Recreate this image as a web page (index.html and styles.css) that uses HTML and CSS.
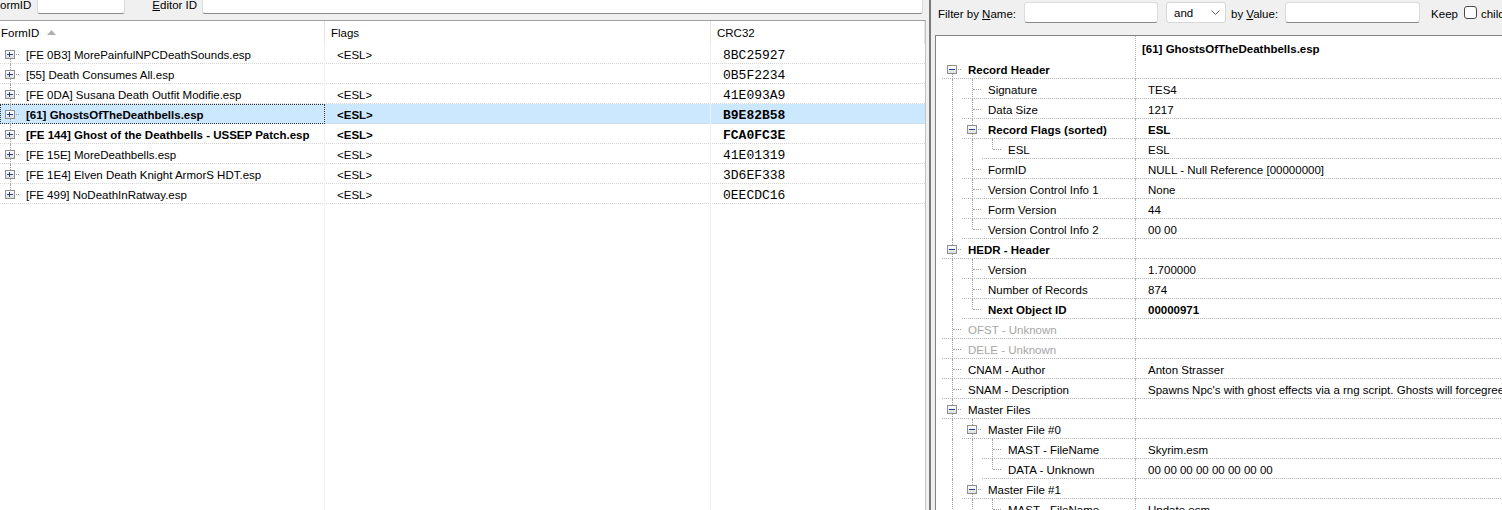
FILE: index.html
```html
<!DOCTYPE html>
<html lang="en">
  <head>
    <meta charset="UTF-8" />
    <title>xEdit - GhostsOfTheDeathbells.esp</title>
    <link rel="stylesheet" href="styles.css">
  </head>
  <body>
    <div class="window">
      <!-- plugin list -->
      <div class="left-pane">
        <div class="search-bar">
          <label class="search-label form-label"><u>F</u>ormID</label>
          <input class="search-input form-input" type="text" />
          <label class="search-label editor-label"><u>E</u>ditor ID</label>
          <input class="search-input editor-input" type="text" />
        </div>

        <div class="plugin-list">
          <div class="list-header">
            <div class="col col-name">
              FormID
              <svg class="sort-arrow" width="9" height="5" viewBox="0 0 9 5"><polygon points="0,5 4.5,0 9,5" /></svg>
            </div>
            <div class="col col-flags">Flags</div>
            <div class="col col-crc">CRC32</div>
          </div>

          <div class="list-row">
            <div class="cell c-name"><span class="node first"><i class="box plus"></i></span>[FE 0B3] MorePainfulNPCDeathSounds.esp</div>
            <div class="cell c-flags">&lt;ESL&gt;</div>
            <div class="cell c-crc">8BC25927</div>
          </div>
          <div class="list-row">
            <div class="cell c-name"><span class="node"><i class="box plus"></i></span>[55] Death Consumes All.esp</div>
            <div class="cell c-flags"></div>
            <div class="cell c-crc">0B5F2234</div>
          </div>
          <div class="list-row">
            <div class="cell c-name"><span class="node"><i class="box plus"></i></span>[FE 0DA] Susana Death Outfit Modifie.esp</div>
            <div class="cell c-flags">&lt;ESL&gt;</div>
            <div class="cell c-crc">41E093A9</div>
          </div>
          <div class="list-row selected bold">
            <div class="cell c-name"><span class="node"><i class="box plus"></i></span>[61] GhostsOfTheDeathbells.esp</div>
            <div class="cell c-flags">&lt;ESL&gt;</div>
            <div class="cell c-crc">B9E82B58</div>
          </div>
          <div class="list-row bold">
            <div class="cell c-name"><span class="node"><i class="box plus"></i></span>[FE 144] Ghost of the Deathbells - USSEP Patch.esp</div>
            <div class="cell c-flags">&lt;ESL&gt;</div>
            <div class="cell c-crc">FCA0FC3E</div>
          </div>
          <div class="list-row">
            <div class="cell c-name"><span class="node"><i class="box plus"></i></span>[FE 15E] MoreDeathbells.esp</div>
            <div class="cell c-flags">&lt;ESL&gt;</div>
            <div class="cell c-crc">41E01319</div>
          </div>
          <div class="list-row">
            <div class="cell c-name"><span class="node"><i class="box plus"></i></span>[FE 1E4] Elven Death Knight ArmorS HDT.esp</div>
            <div class="cell c-flags">&lt;ESL&gt;</div>
            <div class="cell c-crc">3D6EF338</div>
          </div>
          <div class="list-row">
            <div class="cell c-name"><span class="node last"><i class="box plus"></i></span>[FE 499] NoDeathInRatway.esp</div>
            <div class="cell c-flags">&lt;ESL&gt;</div>
            <div class="cell c-crc">0EECDC16</div>
          </div>
          <div class="list-row filler">
            <div class="cell c-name"></div>
            <div class="cell c-flags"></div>
            <div class="cell c-crc"></div>
          </div>
        </div>
      </div>

      <div class="splitter"></div>

      <!-- record view -->
      <div class="right-pane">
        <div class="filter-bar">
          <span>Filter by <u>N</u>ame:</span>
          <input class="filter-input name-input" type="text" />
          <div class="combo">
            and
            <svg width="9" height="5" viewBox="0 0 9 5"><polyline points="0.5,0.5 4.5,4.5 8.5,0.5" /></svg>
          </div>
          <span class="value-label">by <u>V</u>alue:</span>
          <input class="filter-input value-input" type="text" />
          <span class="keep-label">Keep</span>
          <span class="check"></span>
          <span class="check-label">children</span>
        </div>

        <div class="record-view">
          <div class="trow title">
            <div class="tname"></div>
            <div class="tval">[61] GhostsOfTheDeathbells.esp</div>
          </div>

          <div class="trow bold">
            <div class="tname"><div class="tlabel"><span class="node first"><i class="box minus"></i></span>Record Header</div></div>
            <div class="tval"></div>
          </div>
          <div class="trow">
            <div class="tname"><span class="guide"></span><div class="tlabel"><span class="node"></span>Signature</div></div>
            <div class="tval">TES4</div>
          </div>
          <div class="trow">
            <div class="tname"><span class="guide"></span><div class="tlabel"><span class="node"></span>Data Size</div></div>
            <div class="tval">1217</div>
          </div>
          <div class="trow bold">
            <div class="tname"><span class="guide"></span><div class="tlabel"><span class="node"><i class="box minus"></i></span>Record Flags (sorted)</div></div>
            <div class="tval">ESL</div>
          </div>
          <div class="trow">
            <div class="tname"><span class="guide"></span><span class="guide"></span><div class="tlabel"><span class="node last"></span>ESL</div></div>
            <div class="tval">ESL</div>
          </div>
          <div class="trow">
            <div class="tname"><span class="guide"></span><div class="tlabel"><span class="node"></span>FormID</div></div>
            <div class="tval">NULL - Null Reference [00000000]</div>
          </div>
          <div class="trow">
            <div class="tname"><span class="guide"></span><div class="tlabel"><span class="node"></span>Version Control Info 1</div></div>
            <div class="tval">None</div>
          </div>
          <div class="trow">
            <div class="tname"><span class="guide"></span><div class="tlabel"><span class="node"></span>Form Version</div></div>
            <div class="tval">44</div>
          </div>
          <div class="trow">
            <div class="tname"><span class="guide"></span><div class="tlabel"><span class="node last"></span>Version Control Info 2</div></div>
            <div class="tval">00 00</div>
          </div>

          <div class="trow bold">
            <div class="tname"><div class="tlabel"><span class="node"><i class="box minus"></i></span>HEDR - Header</div></div>
            <div class="tval"></div>
          </div>
          <div class="trow">
            <div class="tname"><span class="guide"></span><div class="tlabel"><span class="node"></span>Version</div></div>
            <div class="tval">1.700000</div>
          </div>
          <div class="trow">
            <div class="tname"><span class="guide"></span><div class="tlabel"><span class="node"></span>Number of Records</div></div>
            <div class="tval">874</div>
          </div>
          <div class="trow bold">
            <div class="tname"><span class="guide"></span><div class="tlabel"><span class="node last"></span>Next Object ID</div></div>
            <div class="tval">00000971</div>
          </div>

          <div class="trow muted">
            <div class="tname"><div class="tlabel"><span class="node"></span>OFST - Unknown</div></div>
            <div class="tval"></div>
          </div>
          <div class="trow muted">
            <div class="tname"><div class="tlabel"><span class="node"></span>DELE - Unknown</div></div>
            <div class="tval"></div>
          </div>
          <div class="trow">
            <div class="tname"><div class="tlabel"><span class="node"></span>CNAM - Author</div></div>
            <div class="tval">Anton Strasser</div>
          </div>
          <div class="trow">
            <div class="tname"><div class="tlabel"><span class="node"></span>SNAM - Description</div></div>
            <div class="tval">Spawns Npc's with ghost effects via a rng script. Ghosts will forcegreet the player and then vanish.</div>
          </div>

          <div class="trow">
            <div class="tname"><div class="tlabel"><span class="node"><i class="box minus"></i></span>Master Files</div></div>
            <div class="tval"></div>
          </div>
          <div class="trow">
            <div class="tname"><span class="guide"></span><div class="tlabel"><span class="node"><i class="box minus"></i></span>Master File #0</div></div>
            <div class="tval"></div>
          </div>
          <div class="trow">
            <div class="tname"><span class="guide"></span><span class="guide"></span><div class="tlabel"><span class="node"></span>MAST - FileName</div></div>
            <div class="tval">Skyrim.esm</div>
          </div>
          <div class="trow">
            <div class="tname"><span class="guide"></span><span class="guide"></span><div class="tlabel"><span class="node last"></span>DATA - Unknown</div></div>
            <div class="tval">00 00 00 00 00 00 00 00</div>
          </div>
          <div class="trow">
            <div class="tname"><span class="guide"></span><div class="tlabel"><span class="node"><i class="box minus"></i></span>Master File #1</div></div>
            <div class="tval"></div>
          </div>
          <div class="trow">
            <div class="tname"><span class="guide"></span><span class="guide"></span><div class="tlabel"><span class="node"></span>MAST - FileName</div></div>
            <div class="tval">Update.esm</div>
          </div>
        </div>
      </div>
    </div>
  </body>
</html>
```

FILE: styles.css
```css
body {
  margin: 0;
  font-family: "Liberation Sans", Arial, sans-serif;
  font-size: 11.5px;
  color: #000;
  background-color: #f0f0f0;
  overflow: hidden;
}

.window {
  display: flex;
  height: 510px;
}

/* ---------- left pane ---------- */

.left-pane {
  width: 926px;
  flex: none;
  display: flex;
  flex-direction: column;
  overflow: hidden;
}

.search-bar {
  display: flex;
  align-items: center;
  height: 21px;
  margin-top: -6px; /* scrolled a bit out of view */
  padding-right: 3px;
}

.search-label {
  white-space: nowrap;
}

.form-label {
  margin-left: -7px;
}

.editor-label {
  margin-left: 27px;
}

.search-input,
.filter-input {
  height: 21px;
  box-sizing: border-box;
  margin: 0;
  padding: 0 4px;
  border: 1px solid #dcdcdc;
  border-bottom-color: #8a8a8a;
  border-radius: 3px;
  background-color: #fff;
  font: inherit;
  outline: none;
}

.search-input {
  align-self: flex-start;
  margin-top: -1px;
}

.form-input {
  width: 88px;
  margin-left: 6px;
}

.editor-input {
  flex: 1;
  margin-left: 5px;
}

.plugin-list {
  flex: 1;
  display: flex;
  flex-direction: column;
  margin-top: 5px;
  background-color: #fff;
  border-top: 1px solid #a0a0a0;
  border-right: 1px solid #c4c4c4;
}

.list-header {
  display: flex;
  height: 23px;
  flex: none;
}

.col {
  display: flex;
  align-items: center;
  box-sizing: border-box;
  border-right: 1px solid #e5e5e5;
  white-space: nowrap;
}

.col-name {
  width: 325px;
  padding-left: 1px;
}

.col-flags {
  width: 386px;
  padding-left: 6px;
}

.col-crc {
  flex: 1;
  padding-left: 6px;
}

.sort-arrow {
  margin-left: 8px;
  fill: #b0b0b0;
}

.list-row {
  display: flex;
  height: 20px;
  flex: none;
  /* dotted grid line */
  background-image: linear-gradient(to right, #d6d6d6 1px, transparent 1px);
  background-size: 2px 1px;
  background-position: 0 100%;
  background-repeat: repeat-x;
}

.list-row.selected {
  background-color: #cce8ff;
}

.list-row.bold {
  font-weight: bold;
}

.list-row.filler {
  flex: 1;
  height: auto;
  background-image: none;
}

.cell {
  display: flex;
  align-items: center;
  box-sizing: border-box;
  padding-top: 2px; /* text sits a pixel low, like the native control */
  border-right: 1px solid #efefef;
  white-space: nowrap;
  overflow: hidden;
}

.c-name {
  width: 325px;
}

.selected .c-name {
  outline: 1px dotted #333;
  outline-offset: -1px;
}

.c-flags {
  width: 386px;
  padding-left: 12px;
}

.c-crc {
  flex: 1;
  padding-left: 12px;
  font-family: "Liberation Mono", "DejaVu Sans Mono", monospace;
  font-size: 13px;
  border-right: none;
}

/* ---------- tree connectors ---------- */

.node {
  position: relative;
  flex: none;
  width: 20px;
  align-self: stretch;
  margin-top: -2px;
  margin-right: 6px;
}

.node::before {
  content: "";
  position: absolute;
  left: 10px;
  top: 0;
  bottom: 0;
  border-left: 1px dotted #a0a0a0;
}

.node.first::before {
  top: 10px;
}

.node.last::before {
  bottom: auto;
  height: 10px;
}

.node::after {
  content: "";
  position: absolute;
  left: 11px;
  top: 10px;
  width: 8px;
  border-top: 1px dotted #a0a0a0;
}

.guide {
  position: relative;
  flex: none;
  width: 20px;
}

.guide::before {
  content: "";
  position: absolute;
  left: 10px;
  top: 0;
  bottom: 0;
  border-left: 1px dotted #a0a0a0;
}

.box {
  position: absolute;
  left: 5px;
  top: 6px;
  z-index: 1;
  width: 10px;
  height: 9px;
  box-sizing: border-box;
  border: 1px solid #8f8f8f;
  background: linear-gradient(#fff, #dedede);
}

.box::before {
  content: "";
  position: absolute;
  left: 1px;
  top: 3px;
  width: 6px;
  height: 1px;
  background-color: #26408a;
}

.box.plus::after {
  content: "";
  position: absolute;
  left: 3px;
  top: 1px;
  width: 1px;
  height: 5px;
  background-color: #26408a;
}

/* ---------- right pane ---------- */

.splitter {
  width: 5px;
  flex: none;
  box-sizing: border-box;
  border-right: 2px solid #7a7a7a;
}

.right-pane {
  flex: 1;
  min-width: 0;
  display: flex;
  flex-direction: column;
  padding-left: 4px;
  overflow: hidden;
}

.filter-bar {
  display: flex;
  align-items: center;
  height: 21px;
  margin: 2px 0 12px;
  padding-left: 3px;
  white-space: nowrap;
}

.filter-bar span {
  padding-top: 2px;
}

.name-input {
  width: 134px;
  flex: none;
  margin-left: 8px;
}

.combo {
  display: flex;
  align-items: center;
  justify-content: space-between;
  flex: none;
  width: 60px;
  height: 21px;
  box-sizing: border-box;
  margin-left: 8px;
  padding: 0 5px 0 7px;
  border: 1px solid #d6d6d6;
  border-radius: 3px;
  background-color: #fff;
}

.combo svg {
  fill: none;
  stroke: #606060;
}

.value-label {
  margin-left: 5px;
}

.value-input {
  width: 135px;
  flex: none;
  margin-left: 7px;
}

.keep-label {
  margin-left: 11px;
}

.filter-bar .check {
  flex: none;
  width: 13px;
  height: 13px;
  box-sizing: border-box;
  margin-left: 6px;
  padding: 0;
  border: 1px solid #4a4a4a;
  border-radius: 3px;
  background-color: #fff;
}

.check-label {
  margin-left: 4px;
}

.record-view {
  flex: 1;
  background-color: #fff;
  border-top: 1px solid #828282;
  border-left: 1px solid #828282;
}

.trow {
  display: flex;
  height: 20px;
}

.trow.title {
  height: 23px;
  font-weight: bold;
}

.trow.bold {
  font-weight: bold;
}

.trow.muted {
  color: #a6a6a6;
}

.tname {
  display: flex;
  flex: none;
  width: 200px;
  box-sizing: border-box;
  padding-left: 6px;
  border-right: 1px dotted #b4b4b4;
}

.tlabel,
.tval {
  display: flex;
  align-items: center;
  padding-top: 2px;
  white-space: nowrap;
  overflow: hidden;
  background-image: linear-gradient(to right, #b4b4b4 1px, transparent 1px);
  background-size: 2px 1px;
  background-position: 0 100%;
  background-repeat: repeat-x;
}

.tlabel {
  flex: 1;
}

.tval {
  flex: 1;
  min-width: 0;
  padding-left: 12px;
}

.title .tval {
  padding-left: 6px;
  background-image: none;
}
```
